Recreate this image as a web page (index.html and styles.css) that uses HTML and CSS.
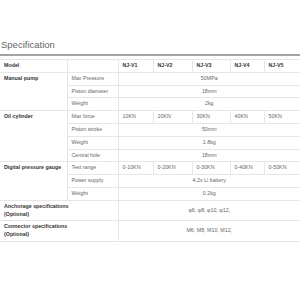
FILE: index.html
```html
<!DOCTYPE html>
<html>
<head>
<meta charset="utf-8">
<link rel="stylesheet" href="styles.css">
</head>
<body>
<div class="page">
  <h2 class="title">Specification</h2>
  <div class="rule"></div>
  <table class="spec">
    <colgroup>
      <col class="c1"><col class="c2"><col class="c3"><col class="c4"><col class="c5"><col class="c6"><col class="c7">
    </colgroup>
    <tr class="head">
      <th>Model</th><th></th><th>NJ-V1</th><th>NJ-V2</th><th>NJ-V3</th><th>NJ-V4</th><th>NJ-V5</th>
    </tr>
    <tr>
      <th class="group" rowspan="3">Manual pump</th><td>Max Pressure</td><td class="mid" colspan="5">50MPa</td>
    </tr>
    <tr><td>Piston diameter</td><td class="mid" colspan="5">18mm</td></tr>
    <tr><td>Weight</td><td class="mid" colspan="5">2kg</td></tr>
    <tr>
      <th class="group" rowspan="4">Oil cylinder</th><td>Max force</td><td>10KN</td><td>20KN</td><td>30KN</td><td>40KN</td><td>50KN</td>
    </tr>
    <tr><td>Piston stroke</td><td class="mid" colspan="5">50mm</td></tr>
    <tr><td>Weight</td><td class="mid" colspan="5">1.8kg</td></tr>
    <tr><td>Central hole</td><td class="mid" colspan="5">18mm</td></tr>
    <tr>
      <th class="group" rowspan="3">Digital pressure gauge</th><td>Test range</td><td>0-10KN</td><td>0-20KN</td><td>0-30KN</td><td>0-40KN</td><td>0-50KN</td>
    </tr>
    <tr><td>Power supply</td><td class="mid" colspan="5">4.2v Li battery</td></tr>
    <tr><td>Weight</td><td class="mid" colspan="5">0.2kg</td></tr>
    <tr class="tall">
      <th class="group" colspan="2">Anchorage specifications<br>(Optional)</th><td class="mid" colspan="5">φ6, φ8, φ10, φ12,</td>
    </tr>
    <tr class="tall">
      <th class="group" colspan="2">Connector specifications<br>(Optional)</th><td class="mid" colspan="5">M6, M8, M10, M12,</td>
    </tr>
  </table>
</div>
</body>
</html>
```
FILE: styles.css
```css
html, body {
  margin: 0;
  padding: 0;
  background: #ffffff;
}

.page {
  width: 300px;
  padding-top: 38px;
  font-family: "Liberation Sans", Arial, sans-serif;
}

.title {
  margin: 0 0 0 1px;
  font-size: 9.5px;
  line-height: 14px;
  font-weight: normal;
  color: #666666;
}

.rule {
  height: 2px;
  margin-top: 2px;
  background: #a3a3a3;
}

.spec {
  margin-top: 3px;
  width: 300px;
  table-layout: fixed;
  border-collapse: collapse;
  box-shadow: 0 2px 3px rgba(0, 0, 0, 0.08);
  font-size: 5.3px;
  line-height: 7.8px;
}

.c1 { width: 67px; }
.c2 { width: 51px; }
.c3 { width: 35px; }
.c4 { width: 39px; }
.c5 { width: 38px; }
.c6 { width: 34px; }
.c7 { width: 36px; }

.spec th,
.spec td {
  border: 1px solid #e6e6e6;
  padding: 2px 4px;
  text-align: left;
  vertical-align: middle;
  white-space: nowrap;
  overflow: hidden;
}

.spec tr > :first-child {
  border-left: none;
}

.spec tr > :last-child {
  border-right: none;
}

.spec th {
  font-weight: bold;
  color: #333333;
}

.spec td {
  color: #666666;
}

.spec .group {
  vertical-align: top;
}

.spec .mid {
  text-align: center;
}
```
